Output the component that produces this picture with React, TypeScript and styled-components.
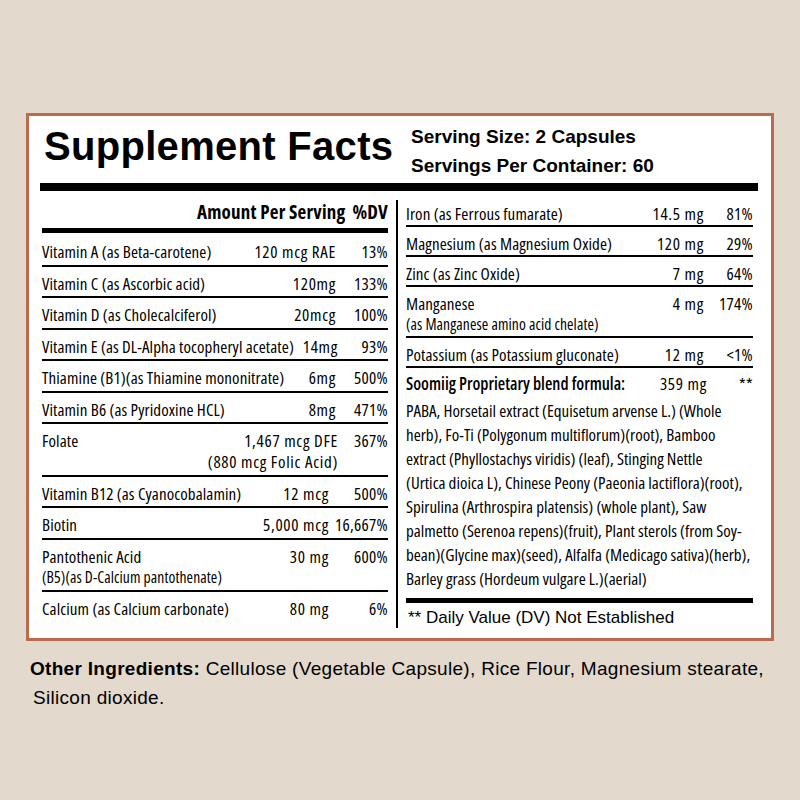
import React from 'react';
import styled, { createGlobalStyle } from 'styled-components';

const Global = createGlobalStyle`
  html, body { margin: 0; padding: 0; background: #e3d9cc; }
  body { font-family: "Liberation Sans", Arial, sans-serif; color: #000; }
`;

const CONDENSED = `"Open Sans", sans-serif`;

const Page = styled.div`
  width: 800px;
  height: 800px;
  box-sizing: border-box;
  padding: 113px 26px 0 26px;
  background: #e3d9cc;
`;

const Card = styled.section`
  width: 748px;
  height: 528px;
  box-sizing: border-box;
  border: 3px solid #bb6a4d;
  background: #fff;
  display: flex;
  flex-direction: column;
`;

const Header = styled.header`
  display: grid;
  grid-template-columns: 367px 1fr;
  height: 67px;
  padding-left: 15px;
  box-sizing: border-box;
`;

const Title = styled.h1`
  margin: 10px 0 0;
  font: bold 40px/40px "Liberation Sans", Arial, sans-serif;
  letter-spacing: 0.3px;
  white-space: nowrap;
`;

const Serving = styled.div`
  margin-top: 5.5px;
  font: bold 19px/29px "Liberation Sans", Arial, sans-serif;
  white-space: nowrap;
`;

const HeavyBar = styled.div`
  height: 8px;
  background: #000;
  margin: 0 13px 0 11px;
`;

const Body = styled.div`
  display: grid;
  grid-template-columns: 346px 2px 347px;
  column-gap: 8px;
  padding-left: 13px;
  flex: 1;
`;

const Divider = styled.div`
  background: #000;
  margin: 9px 0 10px;
`;

const Column = styled.div`
  display: flex;
  flex-direction: column;
  font-family: ${CONDENSED};
  font-stretch: 75%;
  font-weight: 500;
  font-size: 17px;
  letter-spacing: 0.1px;
`;

const ColHead = styled.div`
  display: flex;
  justify-content: flex-end;
  gap: 7px;
  font-weight: bold;
  font-size: 19px;
  letter-spacing: 0.2px;
  line-height: 20px;
  padding: 11px 0 6px;
  border-bottom: 5px solid #000;
`;

const Row = styled.div<{ $pt: number; $pb: number; $last?: boolean }>`
  display: flex;
  align-items: flex-start;
  line-height: 20px;
  padding: ${p => p.$pt}px 0 ${p => p.$pb}px;
  border-bottom: ${p => (p.$last ? 'none' : '2px solid #000')};
`;

const Name = styled.div`
  flex: 1;
  white-space: nowrap;
`;

const Sub = styled.div`
  font-size: 15.6px;
  line-height: 21px;
`;

const Amount = styled.div`
  text-align: right;
  white-space: nowrap;
  letter-spacing: 0.7px;
`;

const AmountSub = styled.div`
  line-height: 21px;
`;

const Dv = styled.div<{ $w: number }>`
  min-width: ${p => p.$w}px;
  text-align: right;
  white-space: nowrap;
  letter-spacing: 0.3px;
`;

const BlendHead = styled.div`
  display: flex;
  line-height: 20px;
  padding-top: 6px;
`;

const BlendName = styled.div`
  font-weight: 600;
  flex: 1;
  white-space: nowrap;
  letter-spacing: 0;
`;

const BlendText = styled.div`
  margin-top: 5px;
  letter-spacing: 0;
  line-height: 24px;
  white-space: nowrap;
`;

const BlendBar = styled.div`
  height: 5px;
  background: #000;
  margin-top: 7px;
`;

const Note = styled.div`
  font: 17px/20px "Liberation Sans", Arial, sans-serif;
  letter-spacing: 0;
  padding: 5px 0 0 2px;
`;

const Footer = styled.footer`
  margin-top: 12.5px;
  padding-left: 4px;
  font: 19px/29px "Liberation Sans", Arial, sans-serif;
  letter-spacing: 0.3px;
`;

const FooterLabel = styled.b`
  font-weight: bold;
`;

const FooterCont = styled.span`
  margin-left: 3px;
`;

type Nutrient = {
  name: string;
  sub?: string;
  amount: string;
  amountSub?: string;
  dv: string;
  dvW?: number;
};

const leftRows: Nutrient[] = [
  { name: 'Vitamin A (as Beta-carotene)', amount: '120 mcg RAE', dv: '13%' },
  { name: 'Vitamin C (as Ascorbic acid)', amount: '120mg', dv: '133%' },
  { name: 'Vitamin D (as Cholecalciferol)', amount: '20mcg', dv: '100%' },
  { name: 'Vitamin E (as DL-Alpha tocopheryl acetate)', amount: '14mg', dv: '93%', dvW: 50 },
  { name: 'Thiamine (B1)(as Thiamine mononitrate)', amount: '6mg', dv: '500%' },
  { name: 'Vitamin B6 (as Pyridoxine HCL)', amount: '8mg', dv: '471%' },
  { name: 'Folate', amount: '1,467 mcg DFE', amountSub: '(880 mcg Folic Acid)', dv: '367%', dvW: 50 },
  { name: 'Vitamin B12 (as Cyanocobalamin)', amount: '12 mcg', dv: '500%', dvW: 59 },
  { name: 'Biotin', amount: '5,000 mcg', dv: '16,667%', dvW: 59 },
  { name: 'Pantothenic Acid', sub: '(B5)(as D-Calcium pantothenate)', amount: '30 mg', dv: '600%', dvW: 59 },
  { name: 'Calcium (as Calcium carbonate)', amount: '80 mg', dv: '6%', dvW: 59 },
];

const rightRows: Nutrient[] = [
  { name: 'Iron (as Ferrous fumarate)', amount: '14.5 mg', dv: '81%' },
  { name: 'Magnesium (as Magnesium Oxide)', amount: '120 mg', dv: '29%' },
  { name: 'Zinc (as Zinc Oxide)', amount: '7 mg', dv: '64%' },
  { name: 'Manganese', sub: '(as Manganese amino acid chelate)', amount: '4 mg', dv: '174%' },
  { name: 'Potassium (as Potassium gluconate)', amount: '12 mg', dv: '<1%' },
];

const blendLines = [
  'PABA, Horsetail extract (Equisetum arvense L.) (Whole',
  'herb), Fo-Ti (Polygonum multiflorum)(root), Bamboo',
  'extract (Phyllostachys viridis) (leaf), Stinging Nettle',
  '(Urtica dioica L), Chinese Peony (Paeonia lactiflora)(root),',
  'Spirulina (Arthrospira platensis) (whole plant), Saw',
  'palmetto (Serenoa repens)(fruit), Plant sterols (from Soy-',
  'bean)(Glycine max)(seed), Alfalfa (Medicago sativa)(herb),',
  'Barley grass (Hordeum vulgare L.)(aerial)',
];

const NutrientRow: React.FC<{ n: Nutrient; pt: number; pb: number; last?: boolean; dvW: number }> = ({
  n,
  pt,
  pb,
  last,
  dvW,
}) => (
  <Row $pt={pt} $pb={pb} $last={last}>
    <Name>
      {n.name}
      {n.sub && <Sub>{n.sub}</Sub>}
    </Name>
    <Amount>
      {n.amount}
      {n.amountSub && <AmountSub>{n.amountSub}</AmountSub>}
    </Amount>
    <Dv $w={n.dvW ?? dvW}>{n.dv}</Dv>
  </Row>
);

export default function App() {
  return (
    <>
      <Global />
      <Page>
        <Card>
          <Header>
            <Title>Supplement Facts</Title>
            <Serving>
              <div>Serving Size: 2 Capsules</div>
              <div>Servings Per Container: 60</div>
            </Serving>
          </Header>
          <HeavyBar />
          <Body>
            <Column>
              <ColHead>
                <span>Amount Per Serving</span>
                <span>%DV</span>
              </ColHead>
              {leftRows.map((n, i) => (
                <NutrientRow
                  key={n.name}
                  n={n}
                  pt={i === 0 ? 9 : 7}
                  pb={2.5}
                  last={i === leftRows.length - 1}
                  dvW={52}
                />
              ))}
            </Column>
            <Divider />
            <Column>
              {rightRows.map((n, i) => (
                <NutrientRow key={n.name} n={n} pt={i === 0 ? 13 : 7} pb={1} dvW={49} />
              ))}
              <BlendHead>
                <BlendName>Soomiig Proprietary blend formula:</BlendName>
                <Amount>359 mg</Amount>
                <Dv $w={46}>**</Dv>
              </BlendHead>
              <BlendText>
                {blendLines.map(l => (
                  <div key={l}>{l}</div>
                ))}
              </BlendText>
              <BlendBar />
              <Note>** Daily Value (DV) Not Established</Note>
            </Column>
          </Body>
        </Card>
        <Footer>
          <div>
            <FooterLabel>Other Ingredients:</FooterLabel> Cellulose (Vegetable Capsule), Rice Flour, Magnesium stearate,
          </div>
          <div>
            <FooterCont>Silicon dioxide.</FooterCont>
          </div>
        </Footer>
      </Page>
    </>
  );
}
